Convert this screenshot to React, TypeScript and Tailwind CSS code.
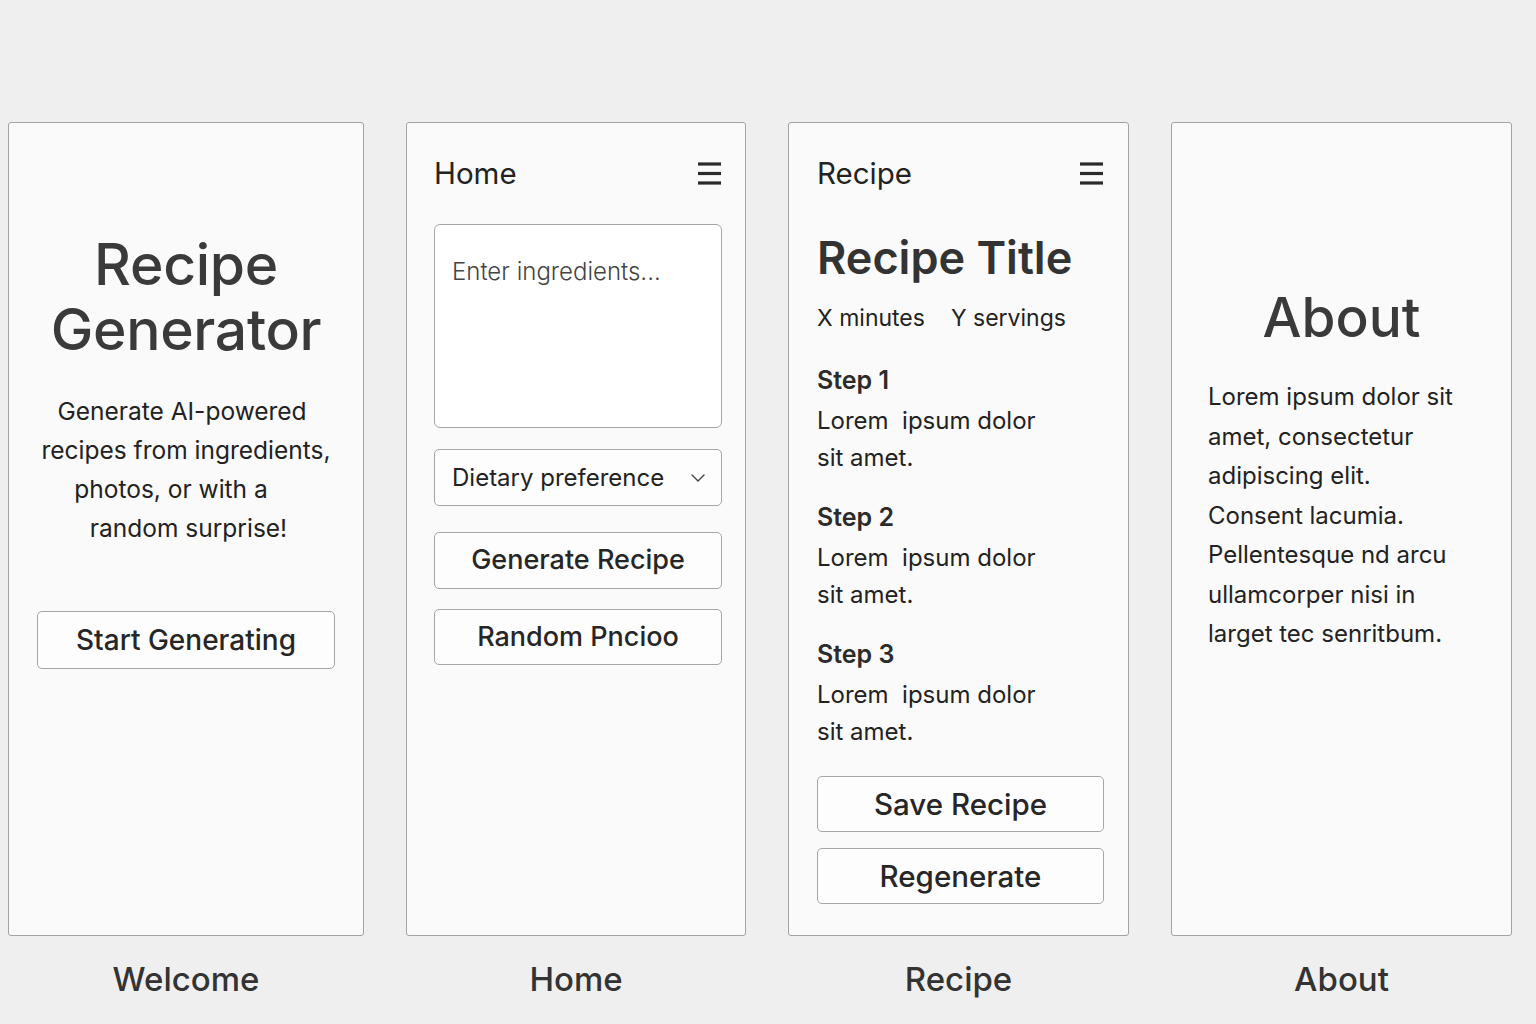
import React from "react";

function Hamburger() {
  return (
    <svg width="25" height="23" viewBox="0 0 25 23" fill="none">
      <line x1="1" y1="2" x2="24" y2="2" stroke="#2a2a2a" strokeWidth="3.2" />
      <line x1="1" y1="11.5" x2="24" y2="11.5" stroke="#2a2a2a" strokeWidth="3.2" />
      <line x1="1" y1="21" x2="24" y2="21" stroke="#2a2a2a" strokeWidth="3.2" />
    </svg>
  );
}

function Chevron() {
  return (
    <svg width="14" height="8" viewBox="0 0 14 8" fill="none">
      <path d="M1 1 L7 7 L13 1" stroke="#444" strokeWidth="1.4" strokeLinecap="round" strokeLinejoin="round" />
    </svg>
  );
}

const panel =
  "h-[814px] rounded-[3px] border border-[#a3a3a3] bg-[#fafafa] flex flex-col";
const btn =
  "flex items-center justify-center rounded-[5px] border border-[#a6a6a6] bg-[#fdfdfd] text-[#262626] font-medium";

function Label({ children }: { children: React.ReactNode }) {
  return (
    <div className="mt-[23px] h-[40px] text-center text-[33px] leading-[40px] font-medium text-[#333]">
      {children}
    </div>
  );
}

function Step({ n, first }: { n: number; first?: boolean }) {
  return (
    <div className={first ? "mt-[30px]" : "mt-[25px]"}>
      <div className="text-[25px] leading-[32px] font-semibold text-[#2b2b2b]">Step {n}</div>
      <div className="mt-[6px] text-[24px] leading-[37px] text-[#222]">
        Lorem&nbsp; ipsum dolor
        <br />
        sit amet.
      </div>
    </div>
  );
}

export default function App() {
  return (
    <div className="w-[1536px] h-[1024px] bg-[#efefef] font-['Inter',sans-serif] overflow-hidden">
      <div className="flex gap-[42px] pl-[8px] pt-[122px]">
        {/* Welcome */}
        <div className="w-[356px] flex flex-col">
          <div className={panel + " items-stretch pt-[109px] px-7"}>
            <h1 className="text-center text-[57px] leading-[65px] font-medium text-[#3a3a3a] tracking-[-0.3px]">
              Recipe
              <br />
              Generator
            </h1>
            <p className="mt-[30px] text-center text-[24.5px] leading-[39px] text-[#222]">
              <span className="block pr-[8px]">Generate AI-powered</span>
              <span className="block">recipes from ingredients,</span>
              <span className="block pr-[30px]">photos, or with a</span>
              <span className="block pl-[5px]">random surprise!</span>
            </p>
            <div className={btn + " mt-[63px] h-[58px] text-[28px]"}>Start Generating</div>
          </div>
          <Label>Welcome</Label>
        </div>

        {/* Home */}
        <div className="w-[340px] flex flex-col">
          <div className={panel + " pt-[30px] pl-[27px] pr-[23px]"}>
            <div className="flex h-[40px] items-center justify-between">
              <span className="text-[29.5px] font-normal text-[#222]">Home</span>
              <Hamburger />
            </div>
            <div className="mt-[31px] h-[204px] rounded-[6px] border border-[#a6a6a6] bg-white pl-[17px] pt-[29px]">
              <div className="text-[24px] leading-[36px] font-light text-[#444]">Enter ingredients...</div>
            </div>
            <div className="mt-[21px] h-[57px] rounded-[5px] border border-[#a6a6a6] bg-[#fdfdfd] flex items-center justify-between pl-[17px] pr-[16px]">
              <span className="text-[24px] text-[#222]">Dietary preference</span>
              <Chevron />
            </div>
            <div className={btn + " mt-[26px] h-[57px] text-[27px]"}>Generate Recipe</div>
            <div className={btn + " mt-[20px] h-[56px] text-[27px]"}>Random Pncioo</div>
          </div>
          <Label>Home</Label>
        </div>

        {/* Recipe */}
        <div className="w-[341px] flex flex-col">
          <div className={panel + " pt-[30px] pl-[28px] pr-[24px]"}>
            <div className="flex h-[40px] items-center justify-between">
              <span className="text-[29.5px] font-normal text-[#222]">Recipe</span>
              <Hamburger />
            </div>
            <h2 className="mt-[37px] text-[45px] leading-[56px] font-semibold text-[#333]">Recipe Title</h2>
            <div className="mt-[16px] flex gap-[26px] text-[23px] leading-[32px] text-[#222]">
              <span>X minutes</span>
              <span>Y servings</span>
            </div>
            <Step n={1} first />
            <Step n={2} />
            <Step n={3} />
            <div className={btn + " mt-[26px] h-[56px] text-[29.5px]"}>Save Recipe</div>
            <div className={btn + " mt-[16px] h-[56px] text-[29.5px]"}>Regenerate</div>
          </div>
          <Label>Recipe</Label>
        </div>

        {/* About */}
        <div className="w-[341px] flex flex-col">
          <div className={panel + " pt-[162px] pl-[36px] pr-[20px]"}>
            <h2 className="text-center pr-[16px] text-[55px] leading-[65px] font-medium text-[#3a3a3a]">About</h2>
            <p className="mt-[27px] text-[24px] leading-[39.5px] text-[#222]">
              Lorem ipsum dolor sit
              <br />
              amet, consectetur
              <br />
              adipiscing elit.
              <br />
              Consent lacumia.
              <br />
              Pellentesque nd arcu
              <br />
              ullamcorper nisi in
              <br />
              larget tec senritbum.
            </p>
          </div>
          <Label>About</Label>
        </div>
      </div>
    </div>
  );
}
